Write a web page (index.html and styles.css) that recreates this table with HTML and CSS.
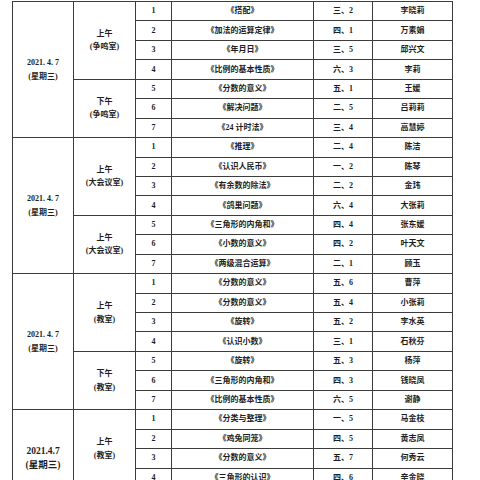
FILE: index.html
```html
<!DOCTYPE html>
<html lang="zh-CN">
<head>
<meta charset="utf-8">
<title>课表</title>
<link rel="stylesheet" href="styles.css">
</head>
<body>
<table class="sched">
  <colgroup>
    <col class="c-date"><col class="c-sess"><col class="c-num"><col class="c-title"><col class="c-cls"><col class="c-tch">
  </colgroup>
  <tbody class="grp">
    <tr><td class="date" rowspan="7">2021. 4. 7<br>(星期三)</td><td class="sess" rowspan="4">上午<br>(争鸣室)</td><td>1</td><td>《搭配》</td><td>三、2</td><td>李晓莉</td></tr>
    <tr><td>2</td><td>《加法的运算定律》</td><td>四、1</td><td>万素娟</td></tr>
    <tr><td>3</td><td>《年月日》</td><td>三、5</td><td>邱兴文</td></tr>
    <tr><td>4</td><td>《比例的基本性质》</td><td>六、3</td><td>李莉</td></tr>
    <tr><td class="sess" rowspan="3">下午<br>(争鸣室)</td><td>5</td><td>《分数的意义》</td><td>五、1</td><td>王媛</td></tr>
    <tr><td>6</td><td>《解决问题》</td><td>二、5</td><td>吕莉莉</td></tr>
    <tr><td>7</td><td>《24 计时法》</td><td>三、4</td><td>高慧婷</td></tr>
  </tbody>
  <tbody class="grp">
    <tr><td class="date" rowspan="7">2021. 4. 7<br>(星期三)</td><td class="sess" rowspan="4">上午<br>(大会议室)</td><td>1</td><td>《推理》</td><td>二、4</td><td>陈洁</td></tr>
    <tr><td>2</td><td>《认识人民币》</td><td>一、2</td><td>陈琴</td></tr>
    <tr><td>3</td><td>《有余数的除法》</td><td>二、2</td><td>金玮</td></tr>
    <tr><td>4</td><td>《鸽巢问题》</td><td>六、4</td><td>大张莉</td></tr>
    <tr><td class="sess" rowspan="3">上午<br>(大会议室)</td><td>5</td><td>《三角形的内角和》</td><td>四、4</td><td>张东媛</td></tr>
    <tr><td>6</td><td>《小数的意义》</td><td>四、2</td><td>叶天文</td></tr>
    <tr><td>7</td><td>《两级混合运算》</td><td>二、1</td><td>顾玉</td></tr>
  </tbody>
  <tbody class="grp">
    <tr><td class="date" rowspan="7">2021. 4. 7<br>(星期三)</td><td class="sess" rowspan="4">上午<br>(教室)</td><td>1</td><td>《分数的意义》</td><td>五、6</td><td>曹萍</td></tr>
    <tr><td>2</td><td>《分数的意义》</td><td>五、4</td><td>小张莉</td></tr>
    <tr><td>3</td><td>《旋转》</td><td>五、2</td><td>李水英</td></tr>
    <tr><td>4</td><td>《认识小数》</td><td>三、1</td><td>石秋芬</td></tr>
    <tr><td class="sess" rowspan="3">下午<br>(教室)</td><td>5</td><td>《旋转》</td><td>五、3</td><td>杨萍</td></tr>
    <tr><td>6</td><td>《三角形的内角和》</td><td>四、3</td><td>钱晓凤</td></tr>
    <tr><td>7</td><td>《比例的基本性质》</td><td>六、5</td><td>谢静</td></tr>
  </tbody>
  <tbody class="grp">
    <tr><td class="date date-big" rowspan="5">2021.4.7<br>(星期三)</td><td class="sess" rowspan="4">上午<br>(教室)</td><td>1</td><td>《分类与整理》</td><td>一、5</td><td>马金枝</td></tr>
    <tr><td>2</td><td>《鸡兔同笼》</td><td>四、5</td><td>黄志凤</td></tr>
    <tr><td>3</td><td>《分数的意义》</td><td>五、7</td><td>何秀云</td></tr>
    <tr><td>4</td><td>《三角形的认识》</td><td>四、6</td><td>辛金晓</td></tr>
    <tr><td class="sess" rowspan="1">下午</td><td>5</td><td>《旋转》</td><td>五、1</td><td>王丽</td></tr>
  </tbody>
</table>
</body>
</html>
```
FILE: styles.css
```css
html, body {
  margin: 0;
  padding: 0;
  background: #ffffff;
}
body {
  padding: 1px 0 0 12px;
  overflow: hidden;
  height: 480px;
  box-sizing: border-box;
}
.sched {
  border-collapse: collapse;
  table-layout: fixed;
  width: 440px;
  font-family: "Liberation Serif", "Noto Sans CJK SC", serif;
  font-size: 8px;
  font-weight: 700;
  color: #1e1e1e;
}
.c-date { width: 61px; }
.c-sess { width: 62px; }
.c-num { width: 36px; }
.c-title { width: 142px; }
.c-cls { width: 59px; }
.c-tch { width: 80px; }
.sched td {
  border: 1px solid #3c3c3c;
  height: 18.45px;
  padding: 0;
  text-align: center;
  vertical-align: middle;
  line-height: 10px;
  white-space: nowrap;
}
.sched td.date, .sched td.sess {
  line-height: 13.5px;
}
.sched td.date-big {
  font-size: 9.5px;
  line-height: 14px;
}
.grp {
  border-top: 1px solid #2e2e2e;
}
```
